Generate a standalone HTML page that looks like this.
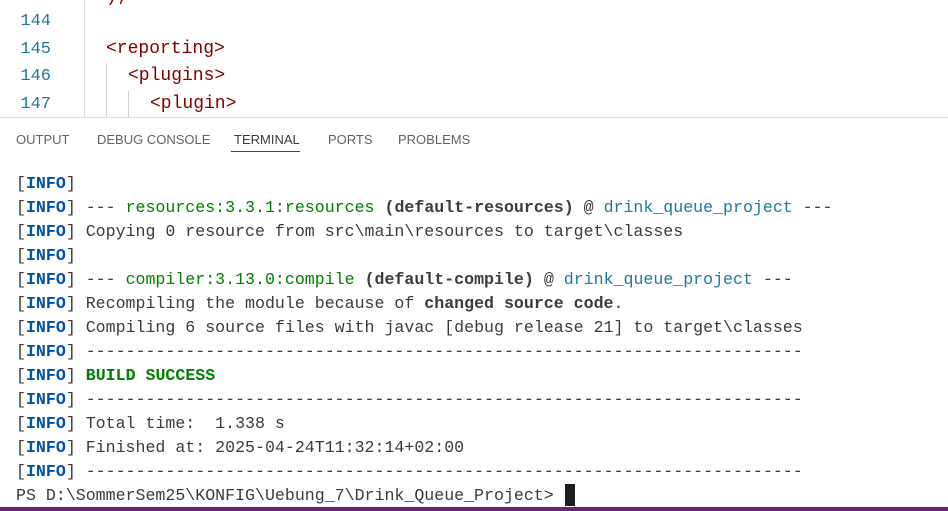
<!DOCTYPE html>
<html><head><meta charset="utf-8"><style>
html,body{margin:0;padding:0;width:948px;height:511px;overflow:hidden;background:#fff;position:relative}
.ln{position:absolute;left:0;width:51px;text-align:right;color:#237893;font-size:17px;font-family:"Liberation Mono",monospace}
.code{position:absolute;font-size:18px;color:#800000;font-family:"Liberation Mono",monospace;white-space:pre}
.guide{position:absolute;width:1px;background:#d3d3d3}
.tab{position:absolute;top:132px;font-family:"Liberation Sans",sans-serif;font-size:13px;color:#616161}
#term{position:absolute;left:16px;top:172px;font-family:"Liberation Mono",monospace;font-size:16.6px;line-height:24px;color:#3b3b3b;white-space:pre}
.i{color:#0451a5;font-weight:bold}
.g{color:#008000}
.t{color:#1f7a9a}
.bd{font-weight:bold}
.gb{color:#008000;font-weight:bold}
</style></head><body>
<div class="ln" style="top:12px">144</div>
<div class="ln" style="top:40px">145</div>
<div class="ln" style="top:67px">146</div>
<div class="ln" style="top:95px">147</div>
<div style="position:absolute;left:84px;top:0;width:1px;height:117px;background:#dcdcdc"></div>
<div class="code" style="left:106px;top:-13px">);</div>
<div class="code" style="left:106px;top:39px">&lt;reporting&gt;</div>
<div class="code" style="left:128px;top:66px">&lt;plugins&gt;</div>
<div class="code" style="left:150px;top:94px">&lt;plugin&gt;</div>
<div class="guide" style="left:106px;top:63px;height:54px"></div>
<div class="guide" style="left:128px;top:91px;height:26px"></div>
<div style="position:absolute;left:0;top:117px;width:948px;height:1px;background:#e0e0e0"></div>
<div class="tab" style="left:16px">OUTPUT</div>
<div class="tab" style="left:97px">DEBUG CONSOLE</div>
<div class="tab" style="left:234px;color:#3b3b3b">TERMINAL</div>
<div style="position:absolute;left:231px;top:151px;width:69px;height:1px;background:#424242"></div>
<div class="tab" style="left:328px">PORTS</div>
<div class="tab" style="left:398px">PROBLEMS</div>
<div id="term">[<span class="i">INFO</span>]
[<span class="i">INFO</span>] --- <span class="g">resources:3.3.1:resources</span> <span class="bd">(default-resources)</span> @ <span class="t">drink_queue_project</span> ---
[<span class="i">INFO</span>] Copying 0 resource from src\main\resources to target\classes
[<span class="i">INFO</span>]
[<span class="i">INFO</span>] --- <span class="g">compiler:3.13.0:compile</span> <span class="bd">(default-compile)</span> @ <span class="t">drink_queue_project</span> ---
[<span class="i">INFO</span>] Recompiling the module because of <span class="bd">changed source code</span>.
[<span class="i">INFO</span>] Compiling 6 source files with javac [debug release 21] to target\classes
[<span class="i">INFO</span>] ------------------------------------------------------------------------
[<span class="i">INFO</span>] <span class="gb">BUILD SUCCESS</span>
[<span class="i">INFO</span>] ------------------------------------------------------------------------
[<span class="i">INFO</span>] Total time:  1.338 s
[<span class="i">INFO</span>] Finished at: 2025-04-24T11:32:14+02:00
[<span class="i">INFO</span>] ------------------------------------------------------------------------
PS D:\SommerSem25\KONFIG\Uebung_7\Drink_Queue_Project&gt; </div>
<div style="position:absolute;left:565px;top:484px;width:10px;height:22px;background:#1e1e1e"></div>
<div style="position:absolute;left:0;top:507px;width:948px;height:4px;background:#68217a"></div>
</body></html>
